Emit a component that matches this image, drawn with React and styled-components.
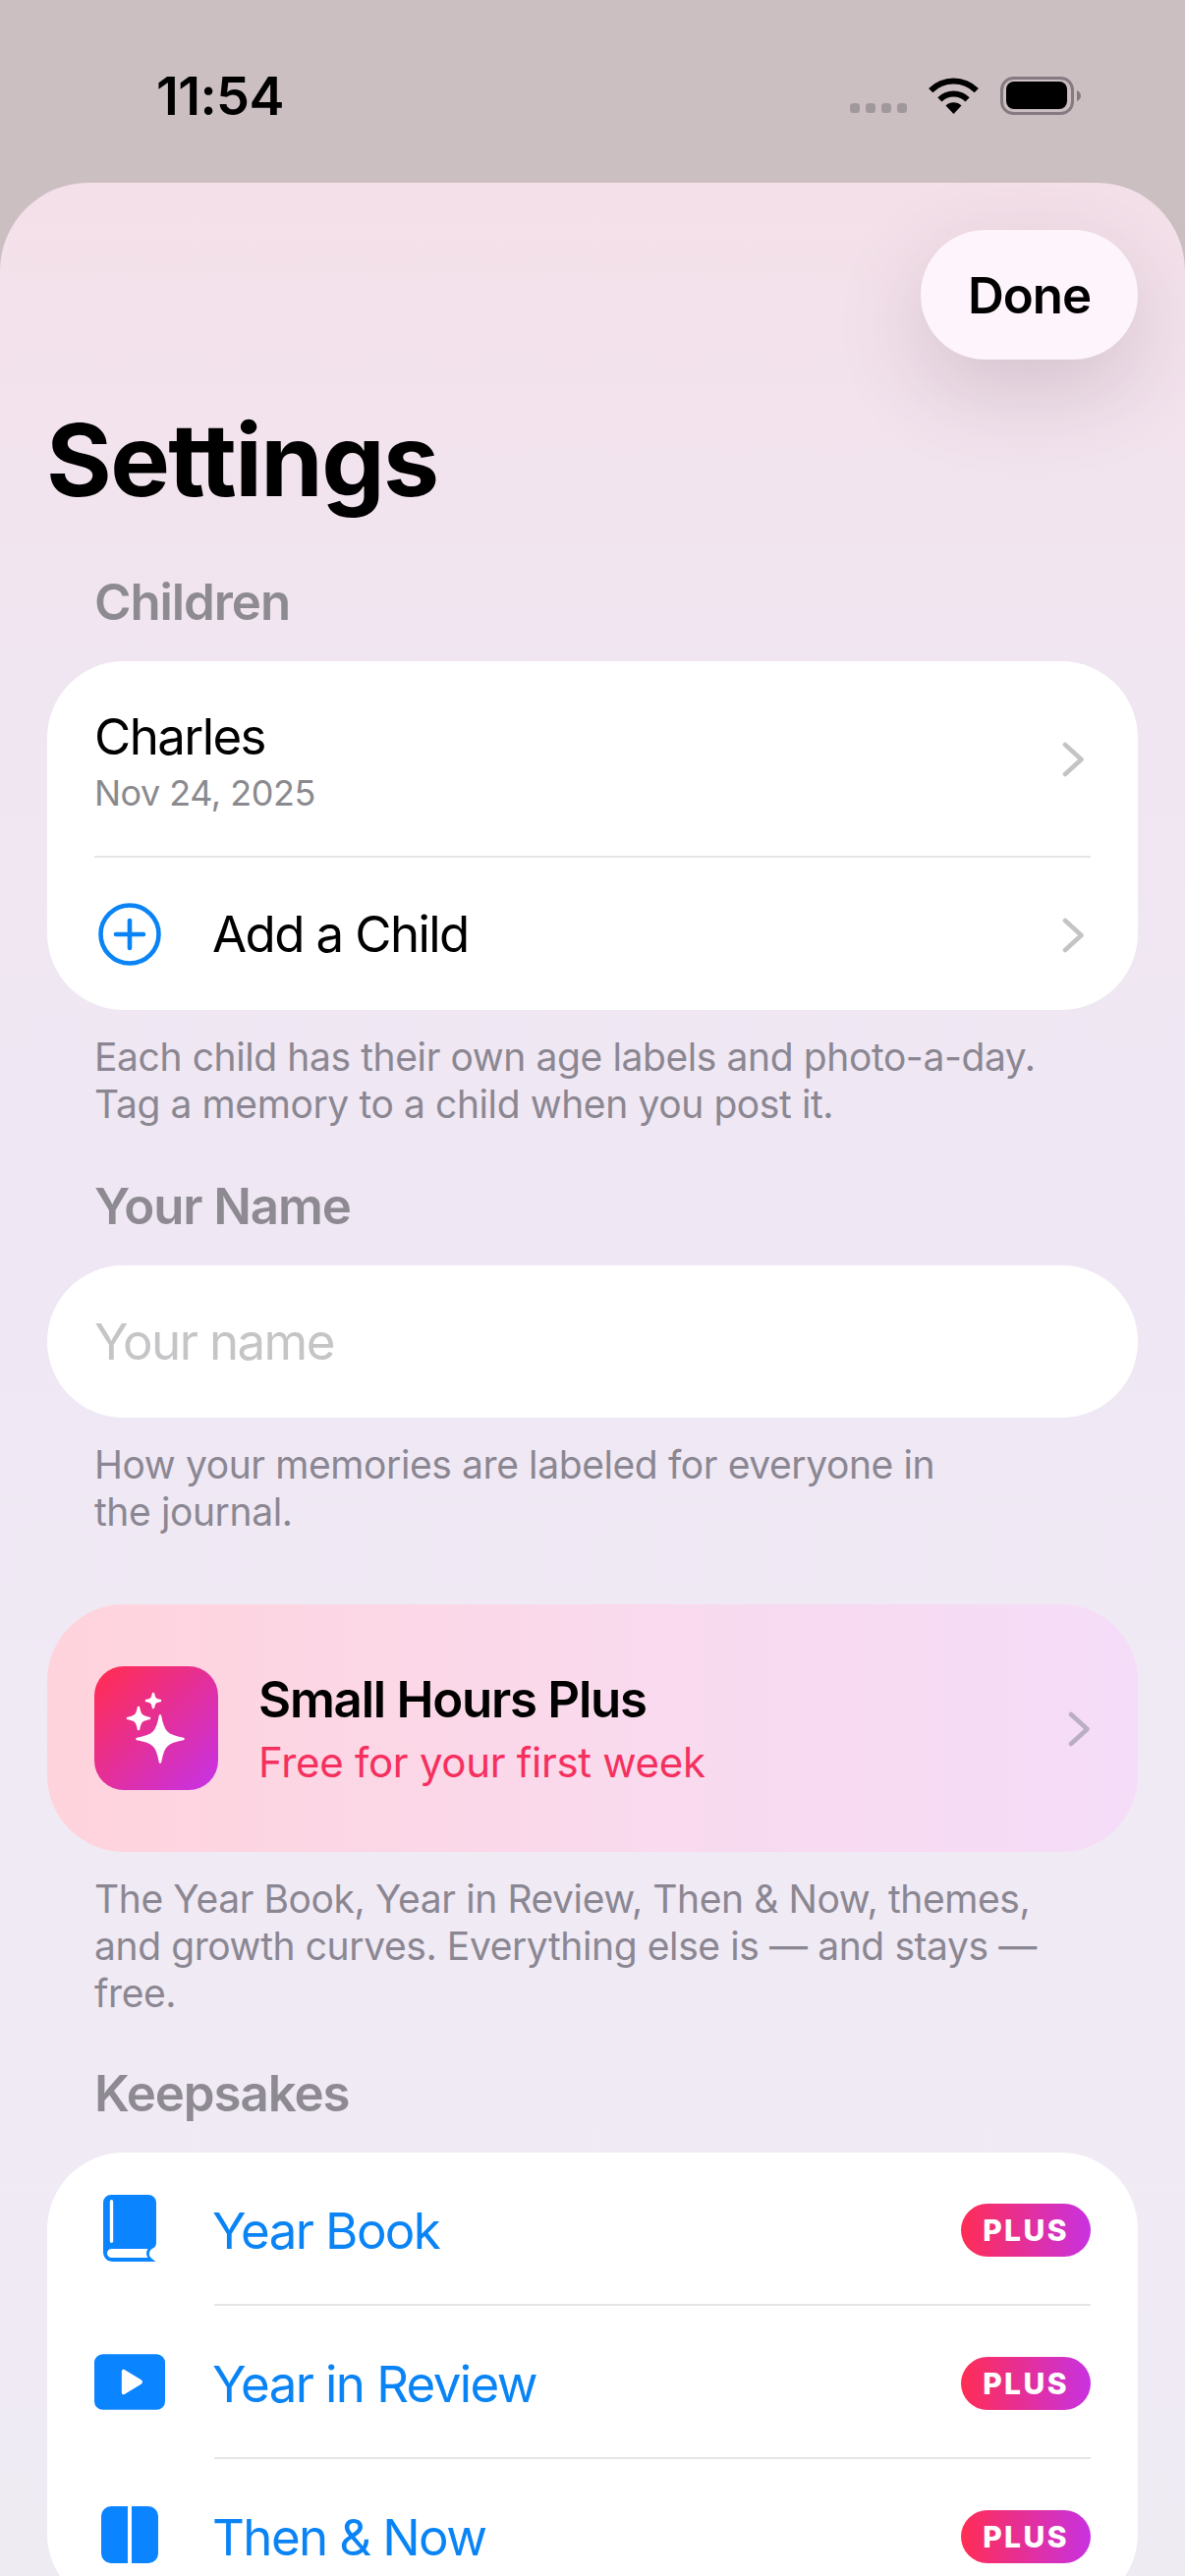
import React from "react";
import styled, { createGlobalStyle } from "styled-components";

const GlobalStyle = createGlobalStyle`
  html, body {
    margin: 0;
    padding: 0;
    background: #cbbfc2;
    font-family: Inter, "Noto Sans", sans-serif;
    -webkit-font-smoothing: antialiased;
  }
  * { box-sizing: border-box; }
`;

const Screen = styled.div`
  width: 1206px;
  height: 2622px;
  overflow: hidden;
  background: #cbbfc2;
`;

const StatusBar = styled.div`
  height: 186px;
  padding: 71px 106px 0 159px;
  display: flex;
  justify-content: space-between;
  align-items: flex-start;
`;

const Time = styled.div`
  font-size: 54px;
  line-height: 54px;
  font-weight: 600;
  letter-spacing: -0.6px;
  color: #000;
`;

const StatusIcons = styled.div`
  display: flex;
  align-items: flex-start;
  padding-top: 7px;
`;

const Dots = styled.div`
  display: flex;
  gap: 6px;
  margin: 27px 22px 0 0;
`;

const Dot = styled.span`
  width: 10px;
  height: 10px;
  border-radius: 3.5px;
  background: #a1989b;
`;

const WifiIcon = styled.svg`
  margin-right: 22px;
  margin-top: 1px;
`;

const Sheet = styled.div`
  min-height: 2436px;
  padding: 48px 48px 0;
  border-radius: 90px 90px 0 0;
  background: linear-gradient(180deg, #f4e0e9 0%, #f0e6f1 20%, #efe8f4 45%, #f0eaf5 65%, #efebf3 100%);
`;

const Nav = styled.div`
  display: flex;
  justify-content: flex-end;
`;

const DoneButton = styled.div`
  width: 221px;
  height: 132px;
  border-radius: 66px;
  background: #fdf4fc;
  box-shadow: 0 30px 90px rgba(90, 60, 80, 0.2);
  display: flex;
  align-items: center;
  justify-content: center;
  font-size: 51px;
  font-weight: 600;
  letter-spacing: -1px;
  color: #000;
`;

const Title = styled.h1`
  margin: 42px 0 0 -1px;
  font-size: 102px;
  line-height: 120px;
  font-weight: 700;
  letter-spacing: -1.6px;
  color: #000;
`;

const SectionLabel = styled.div`
  margin-top: ${(p) => p.$top}px;
  padding-left: 48px;
  font-size: 51px;
  line-height: 60px;
  font-weight: 600;
  letter-spacing: -1.1px;
  color: #8e8a92;
`;

const Card = styled.div`
  margin-top: 30px;
  background: #fff;
  border-radius: 78px;
`;

const Row = styled.div`
  height: ${(p) => p.$height}px;
  padding: 0 48px;
  display: flex;
  align-items: center;
`;

const Divider = styled.div`
  height: 2px;
  margin: 0 48px 0 ${(p) => p.$inset}px;
  background: #e5e5e7;
`;

const RowBody = styled.div`
  flex: 1;
  padding-top: 6px;
`;

const Name = styled.div`
  font-size: 51px;
  line-height: 60px;
  letter-spacing: -1.6px;
  color: #000;
`;

const DateText = styled.div`
  margin-top: 3px;
  font-size: 36px;
  line-height: 48px;
  letter-spacing: -0.5px;
  color: #8a8a8e;
`;

const IconSlot = styled.div`
  width: 72px;
  margin-right: 48px;
  flex-shrink: 0;
  display: flex;
  justify-content: center;
`;

const RowLabel = styled.div`
  flex: 1;
  padding-top: ${(p) => (p.$link ? 6 : 0)}px;
  font-size: 51px;
  line-height: 60px;
  letter-spacing: -1.6px;
  color: ${(p) => (p.$link ? "#0a84f5" : "#000")};
`;

const Chevron = styled.svg`
  flex-shrink: 0;
  margin-right: ${(p) => p.$right ?? 6}px;
  margin-top: 2px;
`;

const NameField = styled.div`
  margin-top: 30px;
  height: 155px;
  padding-left: 48px;
  border-radius: 78px;
  background: #fff;
  display: flex;
  align-items: center;
  font-size: 51px;
  letter-spacing: -1.6px;
  color: #c5c5c7;
`;

const Footnote = styled.p`
  margin: 24px 0 0;
  padding-left: 48px;
  font-size: 39px;
  line-height: 48px;
  letter-spacing: -0.4px;
  color: #8b8792;
`;

const PlusCard = styled.div`
  margin-top: 70px;
  height: 252px;
  padding: 0 48px;
  border-radius: 78px;
  background: linear-gradient(90deg, #ffd3dc 0%, #f9daee 55%, #f5dcf8 100%);
  display: flex;
  align-items: center;
`;

const PlusIcon = styled.div`
  width: 126px;
  height: 126px;
  margin-right: 41px;
  border-radius: 30px;
  flex-shrink: 0;
  background: linear-gradient(135deg, #ff2d55 5%, #c832e0 95%);
`;

const PlusBody = styled.div`
  flex: 1;
  padding-top: 4px;
`;

const PlusName = styled.div`
  font-size: 51px;
  line-height: 58px;
  font-weight: 600;
  letter-spacing: -1.25px;
  color: #000;
`;

const PlusOffer = styled.div`
  margin-top: 8px;
  font-size: 42px;
  line-height: 54px;
  letter-spacing: -0.3px;
  color: #f5305f;
`;

const Pill = styled.div`
  width: 132px;
  height: 54px;
  margin-top: 4px;
  border-radius: 27px;
  flex-shrink: 0;
  background: linear-gradient(90deg, #ff2d55, #c832e0);
  display: flex;
  align-items: center;
  justify-content: center;
  font-size: 30px;
  font-weight: 800;
  letter-spacing: 2.4px;
  color: #fff;
`;

const star = (cx, cy, r) => {
  const a = r * 0.12;
  const b = r * 0.12;
  return `M${cx} ${cy - r}C${cx + a} ${cy - b * 2.4} ${cx + b * 2.4} ${cy - a} ${cx + r} ${cy}C${cx + b * 2.4} ${cy + a} ${cx + a} ${cy + b * 2.4} ${cx} ${cy + r}C${cx - a} ${cy + b * 2.4} ${cx - b * 2.4} ${cy + a} ${cx - r} ${cy}C${cx - b * 2.4} ${cy - a} ${cx - a} ${cy - b * 2.4} ${cx} ${cy - r}Z`;
};

const Sparkles = () => (
  <svg width="126" height="126" viewBox="0 0 126 126">
    <path
      d={`${star(67, 74, 23.5)}${star(45, 53, 11)}${star(60, 35, 7)}`}
      fill="#fff"
      stroke="#fff"
      strokeWidth="2.5"
      strokeLinejoin="round"
    />
  </svg>
);

const ChevronRight = ({ color = "#c4c4c6", right }) => (
  <Chevron $right={right} width="23" height="36" viewBox="0 0 23 36">
    <path d="M3 3 L19.5 18 L3 33" fill="none" stroke={color} strokeWidth="4.6" strokeLinecap="round" strokeLinejoin="round" />
  </Chevron>
);

const AddIcon = () => (
  <svg width="64" height="64" viewBox="0 0 64 64">
    <circle cx="32" cy="32" r="29.5" fill="none" stroke="#0a84f5" strokeWidth="4.6" />
    <path d="M32 18V46M18 32H46" stroke="#0a84f5" strokeWidth="4.6" strokeLinecap="round" />
  </svg>
);

const BookIcon = () => (
  <svg width="54" height="68" viewBox="0 0 54 68">
    <path
      fillRule="evenodd"
      fill="#0a84ff"
      d="M8 0H46a8 8 0 0 1 8 8V49C54 52 52.5 53.5 50.5 54.5C46.5 56.5 45.5 62 49 64.5L53.5 68H10C4 68 0 64 0 58V8a8 8 0 0 1 8-8ZM8.5 5a1.7 1.7 0 0 0-1.7 1.7V47.3a1.7 1.7 0 0 0 3.4 0V6.7A1.7 1.7 0 0 0 8.5 5ZM8.5 55a4.5 4.5 0 0 0 0 9H45.5C43.5 61 43.5 58 45.5 55Z"
    />
  </svg>
);

const PlayIcon = () => (
  <svg width="75" height="59" viewBox="0 0 75 59">
    <path
      fillRule="evenodd"
      fill="#0a84ff"
      d="M9 0H66a9 9 0 0 1 9 9V50a9 9 0 0 1-9 9H9a9 9 0 0 1-9-9V9a9 9 0 0 1 9-9ZM29 18.500V40.500C29 42.500 30.500 43.500 32 42.500L50 31.500C51.300 30.500 51.300 28.500 50 27.500L32 16.500C30.500 15.500 29 16.500 29 18.500Z"
    />
  </svg>
);

const SplitIcon = () => (
  <svg width="58" height="58" viewBox="0 0 58 58">
    <path
      fill="#0a84ff"
      d="M10 0H27V58H10a10 10 0 0 1-10-10V10A10 10 0 0 1 10 0ZM31 0H48a10 10 0 0 1 10 10V48a10 10 0 0 1-10 10H31Z"
    />
  </svg>
);

const keepsakes = [
  { label: "Year Book", Icon: BookIcon },
  { label: "Year in Review", Icon: PlayIcon },
  { label: "Then & Now", Icon: SplitIcon },
];

const App = () => {
  return (
    <Screen>
      <GlobalStyle />
      <StatusBar>
        <Time>11:54</Time>
        <StatusIcons>
          <Dots>
            <Dot />
            <Dot />
            <Dot />
            <Dot />
          </Dots>
          <WifiIcon width="51" height="37" viewBox="0 0 51 37">
            <path
              d="M2.200 13.200A33 33 0 0 1 48.800 13.200M11.400 22.400A20 20 0 0 1 39.600 22.400"
              fill="none"
              stroke="#000"
              strokeWidth="6"
            />
            <path d="M17.500 28.500A11.500 11.500 0 0 1 33.500 28.500L25.500 37Z" fill="#000" />
          </WifiIcon>
          <svg width="82" height="39" viewBox="0 0 82 39">
            <rect x="1.500" y="1.500" width="72" height="36" rx="12" fill="none" stroke="#857a80" strokeWidth="3" />
            <rect x="6" y="5" width="62" height="28" rx="8" fill="#000" />
            <path d="M78 14C80.500 15 82 17 82 19.500C82 22 80.500 24 78 25Z" fill="#857a80" />
          </svg>
        </StatusIcons>
      </StatusBar>

      <Sheet>
        <Nav>
          <DoneButton>Done</DoneButton>
        </Nav>
        <Title>Settings</Title>

        <SectionLabel $top={55}>Children</SectionLabel>
        <Card>
          <Row $height={198}>
            <RowBody>
              <Name>Charles</Name>
              <DateText>Nov 24, 2025</DateText>
            </RowBody>
            <ChevronRight />
          </Row>
          <Divider $inset={48} />
          <Row $height={155}>
            <IconSlot>
              <AddIcon />
            </IconSlot>
            <RowLabel>Add a Child</RowLabel>
            <ChevronRight />
          </Row>
        </Card>
        <Footnote>
          Each child has their own age labels and photo-a-day.
          <br />
          Tag a memory to a child when you post it.
        </Footnote>

        <SectionLabel $top={50}>Your Name</SectionLabel>
        <NameField>Your name</NameField>
        <Footnote>
          How your memories are labeled for everyone in
          <br />
          the journal.
        </Footnote>

        <PlusCard>
          <PlusIcon>
            <Sparkles />
          </PlusIcon>
          <PlusBody>
            <PlusName>Small Hours Plus</PlusName>
            <PlusOffer>Free for your first week</PlusOffer>
          </PlusBody>
          <ChevronRight color="#b9aec4" right={0} />
        </PlusCard>
        <Footnote>
          The Year Book, Year in Review, Then &amp; Now, themes,
          <br />
          and growth curves. Everything else is — and stays —
          <br />
          free.
        </Footnote>

        <SectionLabel $top={48}>Keepsakes</SectionLabel>
        <Card>
          {keepsakes.map(({ label, Icon }, i) => (
            <React.Fragment key={label}>
              {i > 0 && <Divider $inset={170} />}
              <Row $height={154}>
                <IconSlot>
                  <Icon />
                </IconSlot>
                <RowLabel $link>{label}</RowLabel>
                <Pill>PLUS</Pill>
              </Row>
            </React.Fragment>
          ))}
        </Card>
      </Sheet>
    </Screen>
  );
};

export default App;
